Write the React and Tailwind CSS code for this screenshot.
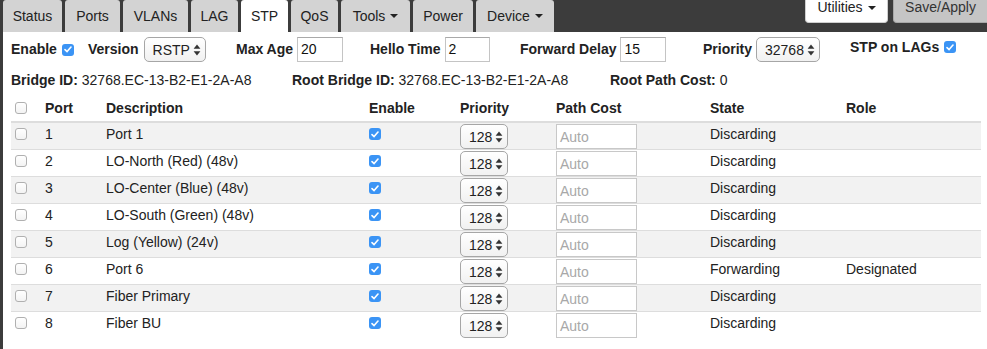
import React from "react";

const FONT = { fontFamily: '"Liberation Sans", Arial, Helvetica, sans-serif' };

function Box({ checked }) {
  if (checked) {
    return (
      <span className="flex h-[12px] w-[12px] shrink-0 items-center justify-center rounded-[3px] bg-[#3b94f5]">
        <svg width="8" height="7" viewBox="0 0 8 7" className="block">
          <path d="M1 3.6 L3.1 5.6 L7 1" fill="none" stroke="white" strokeWidth="1.6" strokeLinecap="round" strokeLinejoin="round" />
        </svg>
      </span>
    );
  }
  return (
    <span className="block h-[12px] w-[12px] shrink-0 rounded-[3px] border border-[#b0b0b0] bg-gradient-to-b from-white to-[#f3f3f3]" />
  );
}

function Arrows() {
  return (
    <svg width="8" height="12" viewBox="0 0 8 12" className="block">
      <path d="M0.6 4.8 L4 0.6 L7.4 4.8 Z" fill="#333" />
      <path d="M0.6 7.2 L4 11.4 L7.4 7.2 Z" fill="#333" />
    </svg>
  );
}

function Select({ value, w }) {
  return (
    <div
      className="flex h-[25px] items-center justify-between rounded-[5px] border border-[#a6a6a6] bg-gradient-to-b from-white to-[#f1f1f1] pl-[8px] pr-[4px] text-[14px] leading-[20px] text-[#222]"
      style={{ width: w }}
    >
      <span>{value}</span>
      <Arrows />
    </div>
  );
}

function Caret() {
  return <span className="ml-[5px] inline-block h-0 w-0 border-x-[4px] border-t-[4px] border-x-transparent border-t-[#222] align-middle" />;
}

const tabs = [
  ["Status", 59],
  ["Ports", 55],
  ["VLANs", 65],
  ["LAG", 47],
  ["STP", 47, true],
  ["QoS", 47],
  ["Tools", 69, false, true],
  ["Power", 60],
  ["Device", 78, false, true],
];

const rows = [
  ["1", "Port 1", "Discarding", ""],
  ["2", "LO-North (Red) (48v)", "Discarding", ""],
  ["3", "LO-Center (Blue) (48v)", "Discarding", ""],
  ["4", "LO-South (Green) (48v)", "Discarding", ""],
  ["5", "Log (Yellow) (24v)", "Discarding", ""],
  ["6", "Port 6", "Forwarding", "Designated"],
  ["7", "Fiber Primary", "Discarding", ""],
  ["8", "Fiber BU", "Discarding", ""],
];

function TextInput({ value, w }) {
  return (
    <div
      className="flex h-[25px] items-center border border-[#c4c4c4] border-t-[#a9a9a9] bg-white px-[3px] text-[14px] text-[#111]"
      style={{ width: w }}
    >
      {value}
    </div>
  );
}

const th = "pl-[4px] pt-[3px] pb-[3px] text-left align-top leading-[20px]";
const td = "pl-[4px] pt-[1px] pb-0 align-top leading-[20px]";

export default function App() {
  return (
    <div className="flex h-[349px] w-[987px] flex-col overflow-hidden bg-[#3c3c3c] text-[#333]" style={FONT}>
      {/* top bar */}
      <div className="flex h-[32px] shrink-0 items-end pl-[3px]">
        <div className="flex h-[32px] gap-[3px]">
          {tabs.map(([t, w, active, caret]) => (
            <div
              key={t}
              className={
                "flex h-[32px] items-center justify-center rounded-t-[3px] text-[14px] text-[#222] " +
                (active ? "bg-white" : "bg-[#d3d3d3]")
              }
              style={{ width: w }}
            >
              {t}
              {caret && <Caret />}
            </div>
          ))}
        </div>
        <div className="ml-auto flex gap-[5px] self-start">
          <div className="flex h-[23px] w-[83px] items-start justify-center rounded-b-[4px] border border-t-0 border-[#cfcfcf] bg-white text-[14px] leading-[15px] text-[#222]">
            <span>Utilities</span>
            <span className="mt-[6px] ml-[5px] inline-block h-0 w-0 border-x-[4px] border-t-[4px] border-x-transparent border-t-[#222]" />
          </div>
          <div className="flex h-[23px] w-[94px] items-start justify-center rounded-bl-[4px] border border-t-0 border-r-0 border-[#a8a8a8] bg-[#c5c5c5] text-[14px] leading-[15px] text-[#333]">
            Save/Apply
          </div>
        </div>
      </div>

      {/* content */}
      <div className="ml-[3px] flex-1 bg-white pl-[8px] text-[14px]">
        {/* form row 1 */}
        <div className="mt-[5px] flex h-[25px] items-center font-bold text-[#222]">
          <div className="flex w-[77px] items-center gap-[5px]">
            <span>Enable</span>
            <Box checked />
          </div>
          <div className="flex w-[148px] items-center gap-[5px]">
            <span>Version</span>
            <div className="font-normal"><Select value="RSTP" w={62} /></div>
          </div>
          <div className="flex w-[134px] items-center gap-[4px]">
            <span>Max Age</span>
            <div className="font-normal"><TextInput value="20" w={46} /></div>
          </div>
          <div className="flex w-[150px] items-center gap-[4px]">
            <span>Hello Time</span>
            <div className="font-normal"><TextInput value="2" w={45} /></div>
          </div>
          <div className="flex w-[183px] items-center gap-[4px]">
            <span>Forward Delay</span>
            <div className="font-normal"><TextInput value="15" w={46} /></div>
          </div>
          <div className="flex w-[147px] items-center gap-[4px]">
            <span>Priority</span>
            <div className="font-normal"><Select value="32768" w={64} /></div>
          </div>
          <div className="flex items-center gap-[5px] self-start">
            <span className="leading-[20px]">STP on LAGs</span>
            <Box checked />
          </div>
        </div>

        {/* form row 2 */}
        <div className="mt-[8px] flex h-[20px] items-center leading-[20px] text-[#222]">
          <div className="w-[281px]"><b>Bridge ID:</b> 32768.EC-13-B2-E1-2A-A8</div>
          <div className="w-[318px]"><b>Root Bridge ID:</b> 32768.EC-13-B2-E1-2A-A8</div>
          <div><b>Root Path Cost:</b> 0</div>
        </div>

        {/* table */}
        <table className="mt-[5px] w-[970px] table-fixed border-collapse text-[14px] text-[#222]">
          <colgroup>
            <col className="w-[30px]" />
            <col className="w-[61px]" />
            <col className="w-[263px]" />
            <col className="w-[91px]" />
            <col className="w-[96px]" />
            <col className="w-[154px]" />
            <col className="w-[136px]" />
            <col className="w-[139px]" />
          </colgroup>
          <thead>
            <tr className="border-b-2 border-[#dddddd]">
              <th className={th}><div className="flex h-[20px] items-center"><Box /></div></th>
              <th className={th}>Port</th>
              <th className={th}>Description</th>
              <th className={th}>Enable</th>
              <th className={th}>Priority</th>
              <th className={th}>Path Cost</th>
              <th className={th}>State</th>
              <th className={th}>Role</th>
            </tr>
          </thead>
          <tbody>
            {rows.map(([n, d, s, r], i) => (
              <tr key={n} className={(i > 0 ? "border-t border-[#dddddd] " : "") + (i % 2 === 0 ? "bg-[#f2f2f2]" : "bg-white")}>
                <td className={td}><div className="flex h-[20px] items-center"><Box /></div></td>
                <td className={td}>{n}</td>
                <td className={td}>{d}</td>
                <td className={td}><div className="flex h-[20px] items-center"><Box checked /></div></td>
                <td className={td}><Select value="128" w={48} /></td>
                <td className={td}>
                  <div className="flex h-[25px] w-[81px] items-center border border-[#c8c8c8] bg-white px-[3px] text-[#a8a8a8]">Auto</div>
                </td>
                <td className={td}>{s}</td>
                <td className={td}>{r}</td>
              </tr>
            ))}
          </tbody>
        </table>
      </div>
    </div>
  );
}
